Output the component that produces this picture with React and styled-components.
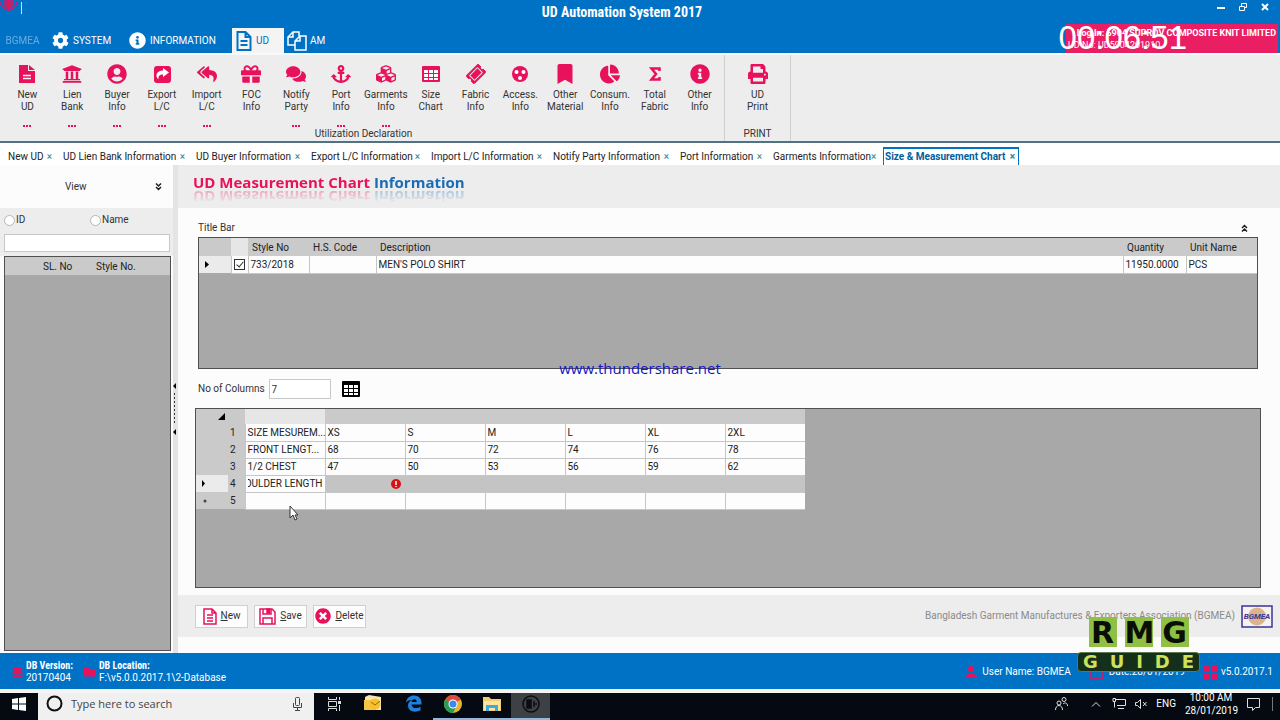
import styled, { createGlobalStyle } from "styled-components";
import {
  FaAnchor,
  FaBookmark,
  FaChartPie,
  FaCog,
  FaComments,
  FaCubes,
  FaDatabase,
  FaFolder,
  FaGift,
  FaInfoCircle,
  FaPrint,
  FaReplyAll,
  FaTicketAlt,
  FaTimesCircle,
  FaUniversity,
  FaUserCircle,
} from "react-icons/fa";

const pink = "#e8115b";
const blue = "#0072c6";
const narrowFont = `"Roboto Condensed", Roboto, sans-serif`;

const GlobalStyle = createGlobalStyle`
  * {
    box-sizing: border-box;
  }

  body {
    margin: 0;
    background: #fcfcfc;
    color: #333;
    font-family: Roboto, "Open Sans", sans-serif;
    font-size: 10px;
    line-height: 14px;
  }

  button,
  input {
    font: inherit;
    color: inherit;
  }
`;

const Page = styled.div`
  position: relative;
  display: flex;
  flex-direction: column;
  min-height: 100vh;
  overflow: hidden;
`;

/* ---------- title bar and menu ---------- */

const TopBar = styled.header`
  background: ${blue};
  color: #fff;
`;

const TitleRow = styled.div`
  display: grid;
  grid-template-columns: 1fr auto 1fr;
  height: 24px;
  padding-right: 4px;
`;

const AppMark = styled.div`
  display: flex;
  gap: 4px;
`;

const AppTitle = styled.h1`
  margin: 0;
  padding-right: 32px;
  font: bold 14px/24px ${narrowFont};
`;

const WindowButtons = styled.div`
  display: flex;
  justify-content: flex-end;
`;

const WindowButton = styled.button`
  width: 22px;
  height: 18px;
  padding: 0;
  border: 0;
  background: none;
`;

const MenuRow = styled.nav`
  display: flex;
  align-items: flex-end;
  height: 29px;
`;

const MenuItem = styled.button`
  display: flex;
  align-items: center;
  gap: ${(props) => props.$gap || 3}px;
  width: ${(props) => props.$width}px;
  height: 25px;
  padding: 0 0 0 3px;
  border: 0;
  background: ${(props) => (props.$active ? "#f4f4f4" : "none")};
  color: ${(props) => (props.$active ? blue : "#fff")};
  opacity: ${(props) => (props.$faded ? 0.4 : 1)};
`;

const LoginBox = styled.div`
  align-self: stretch;
  width: 212px;
  margin-left: auto;
  margin-right: 2px;
  padding: 3px 2px;
  background: #e91e63;
  font-size: 9px;
  font-weight: bold;
  line-height: 12px;
  text-align: right;
  white-space: nowrap;

  p {
    margin: 0;
  }

  p + p {
    text-align: left;
    font-weight: normal;
  }
`;

const Timer = styled.div`
  position: absolute;
  top: 19px;
  right: 93px;
  color: #fff;
  font: 33px/38px "Liberation Sans", sans-serif;
`;

/* ---------- ribbon ---------- */

const Ribbon = styled.section`
  display: flex;
  height: 90px;
  border-top: 2px solid #fafafa;
  border-bottom: 2px solid #4f7384;
  background: #ededed;
`;

const RibbonGroup = styled.div`
  display: flex;
  flex-direction: column;
  width: ${(props) => props.$width}px;
  padding-left: ${(props) => props.$pad || 0}px;
  padding-right: 2px;
  border-right: 1px solid #d0d0d0;
`;

const RibbonItems = styled.div`
  display: grid;
  grid-template-columns: repeat(${(props) => props.$count}, 1fr);
  height: 72px;
`;

const RibbonButton = styled.button`
  display: flex;
  flex-direction: column;
  align-items: center;
  min-width: 0;
  padding: 9px 0 0;
  border: 0;
  background: none;
  line-height: 12px;

  svg {
    flex: none;
    width: 20px;
    height: 20px;
    margin-bottom: 5px;
    color: ${pink};
  }

  span {
    white-space: nowrap;
  }
`;

const Dots = styled.i`
  display: flex;
  gap: 1px;
  margin-top: 12px;

  &::before,
  &::after,
  b {
    content: "";
    width: 2px;
    height: 2px;
    background: ${pink};
  }
`;

const GroupName = styled.div`
  text-align: center;
  line-height: 14px;
`;

/* ---------- document tabs ---------- */

const Tabs = styled.nav`
  display: flex;
  height: 22px;
  padding: 4px 0 0 4px;
  background: #fff;
`;

const Tab = styled.div`
  display: flex;
  align-items: center;
  justify-content: space-between;
  width: ${(props) => props.$width}px;
  padding: 1px 7px 0 ${(props) => (props.$active ? 1 : 4)}px;
  color: #222;

  ${(props) =>
    props.$active &&
    `
    padding-top: 0;
    padding-right: 3px;
    border: 1px solid ${blue};
    border-top-width: 2px;
    border-bottom: 0;
    color: #00609c;
    font-weight: bold;
  `}

  a {
    color: inherit;
    text-decoration: none;
    white-space: nowrap;
  }

  button {
    padding: 0;
    border: 0;
    background: none;
    color: #2d8296;
    line-height: 12px;
  }
`;

/* ---------- side panel ---------- */

const Body = styled.div`
  display: flex;
  flex: 1;
`;

const Side = styled.aside`
  display: flex;
  flex-direction: column;
  width: 173px;
  padding-bottom: 2px;
`;

const SideHead = styled.div`
  display: flex;
  justify-content: space-between;
  align-items: center;
  height: 43px;
  padding: 1px 11px 0 65px;
`;

const SideSearch = styled.div`
  display: grid;
  grid-template-columns: 86px 1fr;
  row-gap: 7px;
  padding: 5px 3px 4px 4px;
  background: #ededed;

  label {
    display: flex;
    align-items: center;
    gap: 1px;
    height: 14px;
  }

  input[type="radio"] {
    appearance: none;
    width: 11px;
    height: 11px;
    margin: 0;
    border: 1px solid #b5b5b5;
    border-radius: 50%;
    background: #fff;
  }
`;

const TextBox = styled.input`
  grid-column: 1 / -1;
  width: ${(props) => props.$width || "100%"};
  height: ${(props) => props.$height || 18}px;
  padding: 0 2px;
  border: 1px solid #c8c8c8;
  background: #fff;
`;

const GridBox = styled.div`
  flex: ${(props) => props.$flex || "none"};
  height: ${(props) => (props.$height ? `${props.$height}px` : "auto")};
  margin: ${(props) => props.$margin || "0"};
  border: 1px solid #505050;
  background: #a8a8a8;
`;

const Splitter = styled.div`
  display: flex;
  align-items: center;
  width: 5px;
  background: #e4e4e4;
`;

/* ---------- tables ---------- */

const Table = styled.table`
  width: ${(props) => props.$width || "100%"};
  border-collapse: collapse;
  table-layout: fixed;
  color: #222;

  th,
  td {
    overflow: hidden;
    padding: 1px 2px 0;
    text-align: left;
    font-weight: normal;
    white-space: nowrap;
  }

  thead th {
    height: ${(props) => props.$head || 18}px;
    padding-left: 4px;
    background: #cacaca;
  }

  tbody td {
    height: 17px;
    border: 1px solid #c6c6c6;
    border-width: 0 0 1px 1px;
    background: #fdfdfd;
  }

  tbody th {
    background: #cacaca;
  }
`;

const RowHead = styled.th`
  && {
    background: ${(props) => (props.$current ? "#ebebeb" : "#cacaca")};
    padding-left: 6px;
  }
`;

const LightHead = styled.th`
  && {
    background: #e6e6e6;
  }
`;

const GreyCell = styled.td`
  && {
    background: #c4c4c4;
    border-left-color: #c4c4c4;
  }
`;

const CheckBox = styled.input`
  appearance: none;
  display: block;
  position: relative;
  width: 11px;
  height: 11px;
  margin: 0 auto;
  border: 1px solid #333;
  background: #fff;

  &:checked::after {
    content: "";
    position: absolute;
    top: 0;
    left: 3px;
    width: 3px;
    height: 6px;
    border: solid #333;
    border-width: 0 1px 1px 0;
    transform: rotate(40deg);
  }
`;

const EditCell = styled.div`
  display: flex;
  justify-content: flex-end;
  overflow: hidden;

  input {
    flex: none;
    width: 96px;
    height: 14px;
    padding: 0;
    border: 0;
    background: none;
    text-align: right;
  }
`;

const ErrorIcon = styled.svg`
  display: block;
  margin: 0 2px 0 auto;
`;

/* ---------- main panel ---------- */

const Main = styled.main`
  display: flex;
  flex: 1;
  flex-direction: column;
  min-width: 0;
`;

const Heading = styled.h2`
  height: 43px;
  margin: 0;
  padding: 7px 15px;
  background: #ededed;
  color: ${pink};
  font-family: "Open Sans", sans-serif;
  font-size: 15px;
  line-height: 20px;

  span {
    display: inline-block;
    -webkit-box-reflect: below -5px
      linear-gradient(transparent 20%, rgba(0, 0, 0, 0.4));
  }

  em {
    color: #1a6cb4;
    font-style: normal;
  }
`;

const Section = styled.div`
  display: flex;
  justify-content: space-between;
  align-items: center;
  height: 29px;
  padding: 10px 32px 0 20px;
`;

const ColumnsRow = styled.div`
  display: flex;
  align-items: center;
  gap: 4px;
  padding: 10px 20px 9px;
`;

const IconButton = styled.button`
  display: flex;
  margin-left: ${(props) => props.$left || 0}px;
  padding: 0;
  border: 0;
  background: none;
`;

const Actions = styled.div`
  display: flex;
  align-items: center;
  gap: 6px;
  height: 42px;
  margin: 7px 0 16px;
  padding: 0 7px 0 17px;
  background: #ededed;
`;

const ActionButton = styled.button`
  display: flex;
  align-items: center;
  justify-content: center;
  gap: 4px;
  width: 53px;
  height: 23px;
  padding: 0;
  border: 1px solid #d0d0d0;
  background: #fdfdfd;

  svg {
    color: ${pink};
  }
`;

const Association = styled.div`
  margin-left: auto;
  color: #8a8a8a;
`;

/* ---------- status bar ---------- */

const StatusBar = styled.footer`
  display: flex;
  align-items: center;
  height: 36px;
  padding: 2px 7px 0 12px;
  background: ${blue};
  color: #fff;
`;

const StatusItem = styled.div`
  display: flex;
  align-items: center;
  gap: ${(props) => props.$gap || 3}px;
  margin-left: ${(props) => props.$left || "0"};
  line-height: 12px;

  svg {
    color: ${pink};
  }

  strong {
    display: block;
    font-family: ${narrowFont};
  }
`;

/* ---------- windows taskbar ---------- */

const Taskbar = styled.div`
  display: flex;
  align-items: center;
  height: 31px;
  border-top: 4px solid #f4f4f4;
  background: #050a12;
  color: #fff;
`;

const TaskButton = styled.button`
  display: flex;
  align-items: center;
  justify-content: center;
  width: ${(props) => props.$width || 39}px;
  height: 27px;
  padding: 0 0 4px;
  border: 0;
  border-bottom: 2px solid ${(props) => (props.$open ? "#8fb8dc" : "transparent")};
  background: ${(props) => (props.$active ? "#3d4146" : "none")};
`;

const SearchBox = styled.label`
  display: flex;
  align-items: center;
  gap: 8px;
  width: 276px;
  height: 27px;
  padding: 0 12px 6px 8px;
  background: #f0f0f0;
  color: #444;

  input {
    flex: 1;
    min-width: 0;
    padding: 0;
    border: 0;
    background: none;
    font-family: "Open Sans", sans-serif;
    font-size: 11px;
  }

  input::placeholder {
    color: #444;
  }
`;

const Tray = styled.div`
  display: flex;
  align-items: center;
  gap: 9px;
  height: 27px;
  margin-left: auto;
  padding: 0 4px 6px 0;
`;

const Clock = styled.div`
  width: 52px;
  line-height: 13px;
  text-align: center;
  white-space: nowrap;
`;

/* ---------- things floating over the window ---------- */

const Watermark = styled.div`
  position: absolute;
  top: 357px;
  left: 0;
  right: 0;
  color: #1414c8;
  font-family: "Open Sans", sans-serif;
  font-size: 15px;
  line-height: 22px;
  text-align: center;
  pointer-events: none;
`;

const ChannelLogo = styled.div`
  position: absolute;
  right: 80px;
  bottom: 48px;
  display: flex;
  flex-direction: column;
  align-items: center;
  gap: 5px;
  width: 123px;
  font-family: "DejaVu Sans", sans-serif;
  font-weight: bold;
`;

const LogoTop = styled.div`
  display: flex;
  gap: 8px;

  span {
    width: 28px;
    height: 30px;
    background: #8fc043;
    color: #0a0f06;
    font-size: 30px;
    line-height: 31px;
    text-align: center;
  }
`;

const LogoBottom = styled.div`
  display: flex;
  justify-content: space-between;
  width: 100%;
  height: 20px;
  padding: 0 5px;
  border: 1px solid #5c7a4a;
  border-radius: 4px;
  background: #14301a;
  color: #cfe05a;
  font-size: 18px;
  line-height: 18px;
`;

const Pointer = styled.svg`
  position: absolute;
  top: 505px;
  left: 289px;
`;

/* ---------- drawings ---------- */

const AppIcon = () => (
  <svg width="17" height="12" viewBox="0 0 17 12" fill="none" stroke={pink}>
    <path d="M1 1v5M4 0v6M13 0v6M16 1v5" strokeWidth="1.5" />
    <path d="M3 6c2 5 9 5 11 0" strokeWidth="2" />
    <path d="M6 0v6h5V0M8.500 0v9" strokeWidth="1.500" />
  </svg>
);

const DocIcon = () => (
  <svg viewBox="0 0 20 20">
    <path d="M2 1h9v6h7v12H2z" fill="currentColor" />
    <path d="M12 1l6 5h-6z" fill="currentColor" />
    <path d="M6 11.500h8M6 14.500h8" stroke="#f4f4f4" strokeWidth="1.500" />
  </svg>
);

const ShareBox = () => (
  <svg viewBox="0 0 20 20">
    <rect x="2" y="2" width="17" height="17" rx="3" fill="currentColor" />
    <path d="M11 4l6 4.500-6 4.500v-2.500c-3.500 0-5 1.500-4.500 5C2.500 12 4.500 6.500 11 6.500z" fill="#fff" />
  </svg>
);

const TableIcon = ({ color, size = 20 }) => (
  <svg width={size} height={size} viewBox="0 0 20 20">
    <rect x="1" y="2" width="18" height="16" rx="1" fill={color} />
    <path
      d="M3 6h4v3H3zM8 6h4v3H8zM13 6h4v3h-4zM3 10h4v3H3zM8 10h4v3H8zM13 10h4v3h-4zM3 14h4v2H3zM8 14h4v2H8zM13 14h4v2h-4z"
      fill="#fff"
    />
  </svg>
);

const Spool = () => (
  <svg viewBox="0 0 20 20">
    <circle cx="10" cy="10" r="8" fill="currentColor" />
    <circle cx="6.500" cy="8" r="2" fill="#fff" />
    <circle cx="13.500" cy="8" r="2" fill="#fff" />
    <circle cx="10" cy="14" r="2" fill="#fff" />
  </svg>
);

const Sigma = () => (
  <svg viewBox="0 0 20 20" fill="none" stroke="currentColor" strokeWidth="2.500">
    <path d="M14.500 7V4.500H6.500L11 10l-4.500 5.500h8V13" />
  </svg>
);

const PagesIcon = () => (
  <svg width="20" height="20" viewBox="0 0 20 20" fill="none" stroke="#fff" strokeWidth="1.500">
    <path d="M8 14H1V6l5-5h6v4M6 1v5H1" />
    <path d="M8 19V10l5-5h6v14zM13 5v5H8" />
  </svg>
);

const PageIcon = () => (
  <svg width="14" height="17" viewBox="0 0 14 17" fill="none" stroke="currentColor" strokeWidth="1.500">
    <path d="M1 1h8l4 4v11H1zM9 1v4h4M4 7h6M4 10h6M4 13h6" />
  </svg>
);

const DiskIcon = () => (
  <svg width="17" height="17" viewBox="0 0 17 17" fill="none" stroke="currentColor" strokeWidth="1.500">
    <path d="M1 1h12l3 3v12H1zM4 16v-6h9v6" />
    <path d="M4 1v5h8V1" />
    <path d="M8 1h2.500v4H8z" fill="currentColor" />
  </svg>
);

const Chevrons = ({ up }) => (
  <svg width="7" height="8" viewBox="0 0 7 8" fill="none" stroke="#222" strokeWidth="1.500">
    <path d={up ? "M1 4l2.500-2.500L6 4M1 7.500L3.500 5 6 7.500" : "M1 .5L3.500 3 6 .5M1 4l2.500 2.500L6 4"} />
  </svg>
);

const BgmeaBadge = () => (
  <svg width="32" height="23" viewBox="0 0 32 23">
    <rect x="1" y="1" width="30" height="21" fill="#f5f2f0" stroke="#3a349c" strokeWidth="1.500" />
    <circle cx="16" cy="11.500" r="9" fill="#dcb48a" />
    <text x="16" y="14" textAnchor="middle" fontSize="8" fontWeight="bold" fontStyle="italic" fill="#3a349c">
      BGMEA
    </text>
  </svg>
);

const ribbonItems = [
  { icon: <DocIcon />, lines: ["New", "UD"], more: true },
  { icon: <FaUniversity />, lines: ["Lien", "Bank"], more: true },
  { icon: <FaUserCircle />, lines: ["Buyer", "Info"], more: true },
  { icon: <ShareBox />, lines: ["Export", "L/C"], more: true },
  { icon: <FaReplyAll />, lines: ["Import", "L/C"], more: true },
  { icon: <FaGift />, lines: ["FOC", "Info"] },
  { icon: <FaComments />, lines: ["Notify", "Party"], more: true },
  { icon: <FaAnchor />, lines: ["Port", "Info"], more: true },
  { icon: <FaCubes />, lines: ["Garments", "Info"], more: true },
  { icon: <TableIcon color={pink} />, lines: ["Size", "Chart"] },
  {
    icon: <FaTicketAlt style={{ transform: "rotate(-45deg) scale(0.9)" }} />,
    lines: ["Fabric", "Info"],
  },
  { icon: <Spool />, lines: ["Access.", "Info"] },
  { icon: <FaBookmark />, lines: ["Other", "Material"] },
  { icon: <FaChartPie />, lines: ["Consum.", "Info"] },
  { icon: <Sigma />, lines: ["Total", "Fabric"] },
  { icon: <FaInfoCircle />, lines: ["Other", "Info"] },
];

const tabs = [
  { name: "New UD", width: 55 },
  { name: "UD Lien Bank Information", width: 133 },
  { name: "UD Buyer Information", width: 115 },
  { name: "Export L/C Information", width: 120 },
  { name: "Import L/C Information", width: 122 },
  { name: "Notify Party Information", width: 127 },
  { name: "Port Information", width: 93 },
  { name: "Garments Information", width: 114 },
  { name: "Size & Measurement Chart", width: 136, active: true },
];

const sizeRows = [
  ["SIZE MESUREM...", "XS", "S", "M", "L", "XL", "2XL"],
  ["FRONT LENGT...", "68", "70", "72", "74", "76", "78"],
  ["1/2 CHEST", "47", "50", "53", "56", "59", "62"],
];

function RibbonItem({ item }) {
  return (
    <RibbonButton>
      {item.icon}
      <span>{item.lines[0]}</span>
      <span>{item.lines[1]}</span>
      {item.more && (
        <Dots>
          <b />
        </Dots>
      )}
    </RibbonButton>
  );
}

function Header() {
  return (
    <TopBar>
      <TitleRow>
        <AppMark>
          <AppIcon />
          <svg width="2" height="16">
            <path d="M0 2h1v12H0z" fill="#cfe3f5" />
          </svg>
        </AppMark>
        <AppTitle>UD Automation System 2017</AppTitle>
        <WindowButtons>
          <WindowButton aria-label="Minimize">
            <svg width="10" height="10" stroke="#fff" strokeWidth="2">
              <path d="M1 6h8" />
            </svg>
          </WindowButton>
          <WindowButton aria-label="Restore">
            <svg width="10" height="10" fill="none" stroke="#fff">
              <path d="M1.500 4.500h5v4h-5zM3.500 4V1.500h5v4H7" />
            </svg>
          </WindowButton>
          <WindowButton aria-label="Close">
            <svg width="10" height="10" stroke="#fff" strokeWidth="2">
              <path d="M2 2l6 6M8 2l-6 6" />
            </svg>
          </WindowButton>
        </WindowButtons>
      </TitleRow>
      <MenuRow>
        <MenuItem $width={49} $faded>
          &nbsp;BGMEA
        </MenuItem>
        <MenuItem $width={77} $gap={4}>
          <FaCog size={17} />
          SYSTEM
        </MenuItem>
        <MenuItem $width={106} $gap={4}>
          <FaInfoCircle size={17} />
          INFORMATION
        </MenuItem>
        <MenuItem $width={52} $active>
          <svg width="18" height="20" viewBox="2 0 17 20" fill="none" stroke="currentColor" strokeWidth="2">
            <path d="M4 1h8l5 5v13H4zM12 1v5h5M7 10h7M7 14h7" />
          </svg>
          UD
        </MenuItem>
        <MenuItem $width={50}>
          <PagesIcon />
          AM
        </MenuItem>
        <LoginBox>
          <p>Log In: 5904 SUPROV COMPOSITE KNIT LIMITED</p>
          <p>UD No: UD5904201910</p>
        </LoginBox>
      </MenuRow>
      <Timer>00:06:51</Timer>
    </TopBar>
  );
}

function SidePanel() {
  return (
    <Side>
      <SideHead>
        View
        <IconButton aria-label="Collapse">
          <Chevrons />
        </IconButton>
      </SideHead>
      <SideSearch>
        <label>
          <input type="radio" name="searchBy" />
          ID
        </label>
        <label>
          <input type="radio" name="searchBy" />
          Name
        </label>
        <TextBox aria-label="Search" />
      </SideSearch>
      <GridBox $flex="1" $margin="0 2px 0 4px">
        <Table>
          <colgroup>
            <col style={{ width: 34 }} />
            <col style={{ width: 53 }} />
            <col />
          </colgroup>
          <thead>
            <tr>
              <th />
              <th>SL. No</th>
              <th>Style No.</th>
            </tr>
          </thead>
        </Table>
      </GridBox>
    </Side>
  );
}

function StyleTable() {
  return (
    <GridBox $height={132} $margin="0 22px 0 20px">
      <Table>
        <colgroup>
          <col style={{ width: 32 }} />
          <col style={{ width: 17 }} />
          <col style={{ width: 61 }} />
          <col style={{ width: 67 }} />
          <col />
          <col style={{ width: 63 }} />
          <col style={{ width: 71 }} />
        </colgroup>
        <thead>
          <tr>
            <th />
            <LightHead />
            <th>Style No</th>
            <th>H.S. Code</th>
            <th>Description</th>
            <th>Quantity</th>
            <th>Unit Name</th>
          </tr>
        </thead>
        <tbody>
          <tr>
            <RowHead $current>
              <svg width="5" height="7">
                <path d="M0 0l4 3.500L0 7z" />
              </svg>
            </RowHead>
            <td>
              <CheckBox type="checkbox" defaultChecked aria-label="Select style" />
            </td>
            <td>733/2018</td>
            <td />
            <td>MEN'S POLO SHIRT</td>
            <td>11950.0000</td>
            <td>PCS</td>
          </tr>
        </tbody>
      </Table>
    </GridBox>
  );
}

function SizeTable() {
  return (
    <GridBox $flex="1" $margin="0 19px 0 17px">
      <Table $width="609px" $head={14}>
        <colgroup>
          <col style={{ width: 32 }} />
          <col style={{ width: 17 }} />
          <col span="7" />
        </colgroup>
        <thead>
          <tr>
            <th colSpan="2">
              <svg width="26" height="8">
                <path d="M25 1v7h-7z" />
              </svg>
            </th>
            <LightHead />
            <th colSpan="6" />
          </tr>
        </thead>
        <tbody>
          {sizeRows.map((row, i) => (
            <tr key={row[0]}>
              <RowHead />
              <th>{i + 1}</th>
              {row.map((cell) => (
                <td key={cell}>{cell}</td>
              ))}
            </tr>
          ))}
          <tr>
            <RowHead $current>
              <svg width="5" height="7">
                <path d="M0 0l3 3.500L0 7z" />
              </svg>
            </RowHead>
            <th>4</th>
            <td>
              <EditCell>
                <input aria-label="Measurement" defaultValue="SHOULDER LENGTH" />
              </EditCell>
            </td>
            <GreyCell>
              <ErrorIcon width="10" height="10">
                <circle cx="5" cy="5" r="5" fill="#dc0f14" />
                <path d="M5 2v4M5 7v1" stroke="#fff" strokeWidth="1.500" />
              </ErrorIcon>
            </GreyCell>
            {[1, 2, 3, 4, 5].map((n) => (
              <GreyCell key={n} />
            ))}
          </tr>
          <tr>
            <RowHead>
              <svg width="5" height="7">
                <circle cx="3" cy="4" r="1.500" fill="#444" />
              </svg>
            </RowHead>
            <th>5</th>
            {[1, 2, 3, 4, 5, 6, 7].map((n) => (
              <td key={n} />
            ))}
          </tr>
        </tbody>
      </Table>
    </GridBox>
  );
}

function MainPanel() {
  return (
    <Main>
      <Heading>
        <span>
          UD Measurement Chart <em>Information</em>
        </span>
      </Heading>
      <Section>
        Title Bar
        <IconButton aria-label="Collapse title bar">
          <Chevrons up />
        </IconButton>
      </Section>
      <StyleTable />
      <ColumnsRow>
        <label htmlFor="columns">No of Columns</label>
        <TextBox id="columns" defaultValue="7" $width="62px" $height={20} />
        <IconButton aria-label="Build table" $left={6}>
          <TableIcon color="#000" />
        </IconButton>
      </ColumnsRow>
      <SizeTable />
      <Actions>
        <ActionButton>
          <PageIcon />
          <span>
            <u>N</u>ew
          </span>
        </ActionButton>
        <ActionButton>
          <DiskIcon />
          <span>
            <u>S</u>ave
          </span>
        </ActionButton>
        <ActionButton>
          <FaTimesCircle size={16} />
          <span>
            <u>D</u>elete
          </span>
        </ActionButton>
        <Association>
          Bangladesh Garment Manufactures &amp; Exporters Association (BGMEA)
        </Association>
        <BgmeaBadge />
      </Actions>
    </Main>
  );
}

function Status() {
  return (
    <StatusBar>
      <StatusItem>
        <FaDatabase size={11} />
        <div>
          <strong>DB Version:</strong>
          20170404
        </div>
      </StatusItem>
      <StatusItem $left="11px">
        <FaFolder size={12} />
        <div>
          <strong>DB Location:</strong>
          F:\v5.0.0.2017.1\2-Database
        </div>
      </StatusItem>
      <StatusItem $left="auto" $gap={5}>
        <svg width="12" height="14" fill="currentColor">
          <circle cx="6" cy="4" r="3" />
          <path d="M0 13c0-6 12-6 12 0z" />
        </svg>
        User Name: BGMEA
      </StatusItem>
      <StatusItem $left="18px" $gap={5}>
        <svg width="15" height="13" fill="none" stroke="currentColor" strokeWidth="1.500">
          <path d="M1 2h13v10H1zM1 5h13" />
        </svg>
        Date:28/01/2019
      </StatusItem>
      <StatusItem $left="18px">
        <svg width="15" height="15" fill="currentColor">
          <path d="M0 0h6v6H0zM8 0h6v6H8zM0 8h6v6H0zM8 8h6v6H8z" />
        </svg>
        v5.0.2017.1
      </StatusItem>
    </StatusBar>
  );
}

function WindowsTaskbar() {
  return (
    <Taskbar>
      <TaskButton aria-label="Start" $width={38}>
        <svg width="14" height="14" fill="#fff">
          <path d="M0 2l6-1v5.500H0zM7 1l7-1v6.500H7zM0 7.500h6V13l-6-1zM7 7.500h7V14l-7-1z" />
        </svg>
      </TaskButton>
      <SearchBox>
        <svg width="17" height="17" fill="none" stroke="#111" strokeWidth="2">
          <circle cx="8.500" cy="8.500" r="7" />
        </svg>
        <input placeholder="Type here to search" aria-label="Search Windows" />
        <svg width="9" height="14" fill="none" stroke="#444">
          <rect x="2.500" y=".5" width="4" height="8" rx="1" />
          <path d="M.5 6v4.500h8V6M4.500 10.500V14M2 13.500h5" />
        </svg>
      </SearchBox>
      <TaskButton aria-label="Task view">
        <svg width="14" height="14" fill="none" stroke="#ddd">
          <path d="M1.500 0v2.500h8V0M1.500 4.500h8v5h-8zM1.500 14v-2.500h8V14M12.500 0v3M12.500 8v6" />
          <path d="M11 4h3v3h-3z" fill="#ddd" stroke="none" />
        </svg>
      </TaskButton>
      <TaskButton aria-label="Outlook" $width={40}>
        <svg width="18" height="17">
          <path d="M1 2l4-2 12 2v13H1z" fill="#f6e6b4" />
          <path d="M0 5h12v10H0z" fill="#f3c545" />
          <circle cx="11" cy="9" r="5.500" fill="#f9bf2c" />
          <path d="M7 7l4 3 5-4" fill="none" stroke="#946a10" />
        </svg>
      </TaskButton>
      <TaskButton aria-label="Edge" $width={40}>
        <svg width="17" height="17" viewBox="0 0 17 17">
          <path
            d="M1 7.500C2 2.500 5 .5 9 .5c5 0 7.500 3.500 7.500 7.500v1.500h-10c.3 4 5.500 4.500 9 2.300v3.500C9 18.500 3 16 3 10.500c0-2.500 1.500-4.500 4-5.500C4.500 5 2.500 5.800 1 7.500zM6.500 7h5.300C11.800 3 7 3.500 6.500 7z"
            fill="#1e7fdc"
          />
        </svg>
      </TaskButton>
      <TaskButton aria-label="Chrome" $open>
        <svg width="18" height="18" viewBox="0 0 18 18">
          <circle cx="9" cy="9" r="9" fill="#e2b72d" />
          <path d="M9 9L1.200 4.500A9 9 0 0 1 16.800 4.500z" fill="#de4a3c" />
          <path d="M9 9L1.200 4.500A9 9 0 0 0 9 18l3-6z" fill="#2c9c54" />
          <circle cx="9" cy="9" r="4.500" fill="#fff" />
          <circle cx="9" cy="9" r="3.500" fill="#4185ef" />
        </svg>
      </TaskButton>
      <TaskButton aria-label="File explorer" $open>
        <svg width="18" height="16">
          <path d="M0 1h6l2 2h10v12H0z" fill="#f3ce70" />
          <path d="M1 5h16v9H1z" fill="#fbe5a2" />
          <path d="M3 15V9h12v6h-3v-3H6v3z" fill="#3fa8dc" />
        </svg>
      </TaskButton>
      <TaskButton aria-label="Recorder" $open $active>
        <svg width="18" height="18" fill="none" stroke="#0b0d10" strokeWidth="1.500">
          <circle cx="9" cy="9" r="8" />
          <path d="M5 5h4v8H5z" fill="#0b0d10" />
          <path d="M12 6v6M14 8v2" />
        </svg>
      </TaskButton>
      <Tray>
        <svg width="13" height="14" fill="none" stroke="#ddd">
          <circle cx="4" cy="6" r="2" />
          <path d="M.5 13c0-6 7-6 7 0" />
          <circle cx="9" cy="2.500" r="2" />
          <path d="M8 7c2-2 4.500-1 4.500 2" />
        </svg>
        <svg width="26" height="8" fill="none" stroke="#ddd">
          <path d="M15 6.500l4-4 4 4" />
        </svg>
        <svg width="14" height="12" fill="none" stroke="#ddd">
          <path d="M4 1.500h9.500v6H5M1 .5h2.500v3H1zM2.500 4v5.500M6 10.500h6" />
        </svg>
        <svg width="12" height="10" fill="none" stroke="#ddd">
          <path d="M.5 3.500h2L5.500.5v9l-3-3h-2zM8 3l3.500 4M11.500 3L8 7" />
        </svg>
        ENG
        <Clock>
          10:00 AM
          <br />
          28/01/2019
        </Clock>
        <svg width="30" height="14" fill="none" stroke="#ddd">
          <path d="M1.500 1.500h12v9h-4l-3 3v-3h-5z" />
          <path d="M26.500 0v14" stroke="#777" />
        </svg>
      </Tray>
    </Taskbar>
  );
}

export default function App() {
  return (
    <Page>
      <GlobalStyle />
      <Header />
      <Ribbon>
        <RibbonGroup $width={725} $pad={5}>
          <RibbonItems $count={16}>
            {ribbonItems.map((item) => (
              <RibbonItem key={item.lines.join(" ")} item={item} />
            ))}
          </RibbonItems>
          <GroupName>Utilization Declaration</GroupName>
        </RibbonGroup>
        <RibbonGroup $width={66} $pad={2}>
          <RibbonItems $count={1}>
            <RibbonItem item={{ icon: <FaPrint />, lines: ["UD", "Print"] }} />
          </RibbonItems>
          <GroupName>PRINT</GroupName>
        </RibbonGroup>
      </Ribbon>
      <Tabs>
        {tabs.map((tab) => (
          <Tab key={tab.name} $width={tab.width} $active={tab.active}>
            <a href="#tab">{tab.name}</a>
            <button aria-label={`Close ${tab.name}`}>×</button>
          </Tab>
        ))}
      </Tabs>
      <Body>
        <SidePanel />
        <Splitter>
          <svg width="4" height="52">
            <path d="M3 0v6L0 3zM3 46v6l-3-3z" />
            <path d="M1.500 10v32" stroke="#333" strokeDasharray="2 2" />
          </svg>
        </Splitter>
        <MainPanel />
      </Body>
      <Status />
      <WindowsTaskbar />
      <Watermark>www.thundershare.net</Watermark>
      <ChannelLogo>
        <LogoTop>
          <span>R</span>
          <span>M</span>
          <span>G</span>
        </LogoTop>
        <LogoBottom>
          <span>G</span>
          <span>U</span>
          <span>I</span>
          <span>D</span>
          <span>E</span>
        </LogoBottom>
      </ChannelLogo>
      <Pointer width="10" height="16">
        <path d="M1 1v12l3-3 2 5 2-1-2-4h3z" fill="#fff" stroke="#333" />
      </Pointer>
    </Page>
  );
}
